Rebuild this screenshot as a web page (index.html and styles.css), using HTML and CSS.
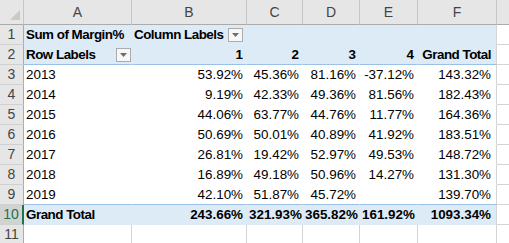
FILE: index.html
```html
<!DOCTYPE html>
<html>
<head>
<meta charset="utf-8">
<title>Pivot table</title>
<link rel="stylesheet" href="styles.css">
</head>
<body>
<table class="sheet">
<colgroup>
<col class="w-hd"><col class="w-a"><col class="w-b"><col class="w-c"><col class="w-d"><col class="w-e"><col class="w-f"><col class="w-g">
</colgroup>
<tr class="letters">
<th class="corner"><span class="tri"></span></th>
<th>A</th><th>B</th><th>C</th><th>D</th><th>E</th><th>F</th><th></th>
</tr>
<tr>
<th class="num">1</th>
<td class="head b lbl">Sum of Margin%</td>
<td class="head b lbl"><div class="split"><span>Column Labels</span><span class="drop"><svg width="7" height="4" viewBox="0 0 7 4"><path d="M0 0H7L3.5 4Z" fill="#6d6d6d"/></svg></span></div></td>
<td class="head"></td><td class="head"></td><td class="head"></td><td class="head last"></td>
<td class="grid"></td>
</tr>
<tr>
<th class="num">2</th>
<td class="head b lbl line"><div class="split"><span>Row Labels</span><span class="drop edge"><svg width="7" height="4" viewBox="0 0 7 4"><path d="M0 0H7L3.5 4Z" fill="#6d6d6d"/></svg></span></div></td>
<td class="head b r line">1</td>
<td class="head b r line">2</td>
<td class="head b r line">3</td>
<td class="head b r line">4</td>
<td class="head b lbl r line last">Grand Total</td>
<td class="grid"></td>
</tr>
<tr><th class="num">3</th><td class="pv">2013</td><td class="pv r">53.92%</td><td class="pv r">45.36%</td><td class="pv r">81.16%</td><td class="pv r">-37.12%</td><td class="pv r last">143.32%</td><td class="grid"></td></tr>
<tr><th class="num">4</th><td class="pv">2014</td><td class="pv r">9.19%</td><td class="pv r">42.33%</td><td class="pv r">49.36%</td><td class="pv r">81.56%</td><td class="pv r last">182.43%</td><td class="grid"></td></tr>
<tr><th class="num">5</th><td class="pv">2015</td><td class="pv r">44.06%</td><td class="pv r">63.77%</td><td class="pv r">44.76%</td><td class="pv r">11.77%</td><td class="pv r last">164.36%</td><td class="grid"></td></tr>
<tr><th class="num">6</th><td class="pv">2016</td><td class="pv r">50.69%</td><td class="pv r">50.01%</td><td class="pv r">40.89%</td><td class="pv r">41.92%</td><td class="pv r last">183.51%</td><td class="grid"></td></tr>
<tr><th class="num">7</th><td class="pv">2017</td><td class="pv r">26.81%</td><td class="pv r">19.42%</td><td class="pv r">52.97%</td><td class="pv r">49.53%</td><td class="pv r last">148.72%</td><td class="grid"></td></tr>
<tr><th class="num">8</th><td class="pv">2018</td><td class="pv r">16.89%</td><td class="pv r">49.18%</td><td class="pv r">50.96%</td><td class="pv r">14.27%</td><td class="pv r last">131.30%</td><td class="grid"></td></tr>
<tr><th class="num">9</th><td class="pv line">2019</td><td class="pv r line">42.10%</td><td class="pv r line">51.87%</td><td class="pv r line">45.72%</td><td class="pv r line"></td><td class="pv r line last">139.70%</td><td class="grid"></td></tr>
<tr><th class="num sel">10</th><td class="tot b lbl">Grand Total</td><td class="tot b r">243.66%</td><td class="tot b r">321.93%</td><td class="tot b r">365.82%</td><td class="tot b r">161.92%</td><td class="tot b r last">1093.34%</td><td class="grid"></td></tr>
<tr><th class="num">11</th><td class="grid"></td><td class="grid"></td><td class="grid"></td><td class="grid"></td><td class="grid"></td><td class="grid"></td><td class="grid"></td></tr>
</table>
</body>
</html>
```

FILE: styles.css
```css
html, body{
    margin: 0;
    background: #fff;
    overflow: hidden;
}
.sheet{
    table-layout: fixed;
    width: 530px;
    border-collapse: separate;
    border-spacing: 0;
    font-family: "Liberation Sans", Arial, sans-serif;
    font-size: 13.4px;
    color: #000;
}
.w-hd{ width: 24px; }
.w-a{ width: 108px; }
.w-b{ width: 115px; }
.w-c{ width: 56px; }
.w-d{ width: 57px; }
.w-e{ width: 58px; }
.w-f{ width: 79px; }
.w-g{ width: 33px; }

th, td{
    padding: 0;
    height: 19px;
    line-height: 19px;
    white-space: nowrap;
    overflow: hidden;
    vertical-align: bottom;
    border-right: 1px solid #d4d4d4;
    border-bottom: 1px solid #d4d4d4;
}

/* column letters */
.letters th{
    height: 24px;
    line-height: 24px;
    vertical-align: middle;
    background: #e6e6e6;
    color: #444;
    font-weight: normal;
    font-size: 14px;
    border-right: 1px solid #c6c6c6;
    border-bottom: 1px solid #ababab;
}
.letters th:last-child{
    border-right: none;
}
.corner{
    position: relative;
}
.tri{
    position: absolute;
    right: 3px;
    bottom: 4px;
    width: 0;
    height: 0;
    border-left: 10px solid transparent;
    border-bottom: 10px solid #c9c9c9;
}

/* row numbers */
.num{
    background: #e6e6e6;
    color: #444;
    font-weight: normal;
    font-size: 14px;
    text-align: center;
    vertical-align: middle;
    border-right: 1px solid #ababab;
    border-bottom: 1px solid #d0d0d0;
}
.num.sel{
    background: #d2d2d2;
    color: #217346;
    border-right: 2px solid #217346;
}

/* pivot cells */
.head{
    background: #ddebf7;
    border-color: #ddebf7;
    padding: 0 3px 0 2px;
}
.pv{
    background: #fff;
    border-color: #fff;
    padding: 0 3px 0 2px;
}
.tot{
    background: #ddebf7;
    border-color: #ddebf7;
    padding: 0 3px 0 2px;
}
td.last{
    border-right-color: #d4d4d4;
    padding-right: 5px;
}
td.line{
    border-bottom-color: #9bc2e6;
}
.b{ font-weight: bold; }
.lbl{ letter-spacing: -0.5px; }
.r{ text-align: right; }

.split{
    display: flex;
    justify-content: space-between;
    align-items: center;
    height: 19px;
}
.drop{
    box-sizing: border-box;
    display: flex;
    align-items: center;
    justify-content: center;
    width: 15px;
    height: 14px;
    border: 1px solid #ababab;
    background: #f7f7f7;
}
.drop.edge{
    margin-right: -3px;
}
```
